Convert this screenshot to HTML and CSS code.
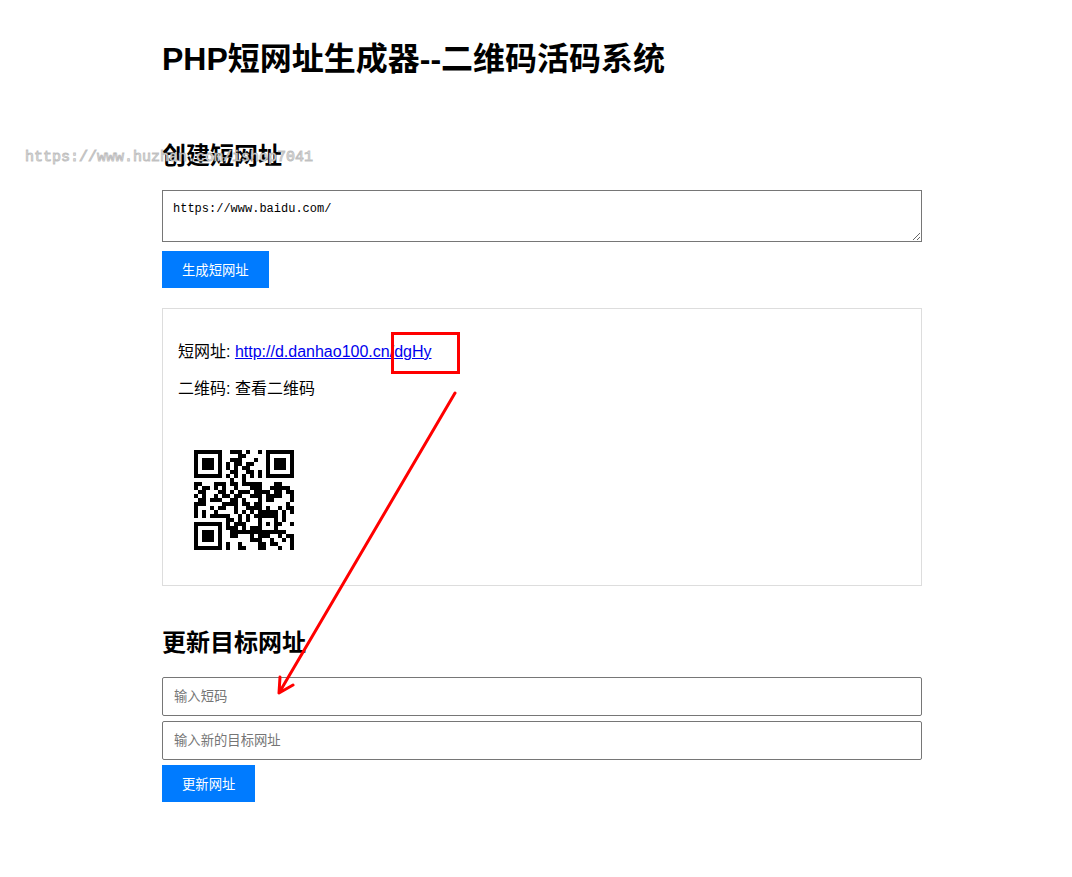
FILE: index.html
```html
<!DOCTYPE html>
<html lang="zh-CN">
  <head>
    <meta charset="UTF-8" />
    <meta name="viewport" content="width=device-width, initial-scale=1.0" />
    <title>PHP短网址生成器--二维码活码系统</title>
    <link rel="stylesheet" href="styles.css">
  </head>
  <body>
    <main class="container">
      <h1>PHP短网址生成器--二维码活码系统</h1>

      <section class="section">
        <h2 id="createTitle">创建短网址</h2>
        <form class="form">
          <textarea rows="2" class="field url-input" aria-labelledby="createTitle">https://www.baidu.com/</textarea>
          <button type="button">生成短网址</button>
        </form>

        <div class="result">
          <p>短网址: <a href="http://d.danhao100.cn/dgHy">http://d.danhao100.cn/<span class="short-code">dgHy</span></a></p>
          <p>二维码: 查看二维码</p>
          <svg class="qrcode" id="qrcode" role="img" aria-label="二维码"></svg>
        </div>
      </section>

      <section class="section">
        <h2>更新目标网址</h2>
        <form class="form">
          <input type="text" class="field" placeholder="输入短码" aria-label="输入短码" />
          <input type="text" class="field" placeholder="输入新的目标网址" aria-label="输入新的目标网址" />
          <button type="button">更新网址</button>
        </form>
      </section>

      <!-- 标注箭头 -->
      <svg class="arrow" viewBox="0 0 190 310" fill="none" stroke="#f00" stroke-width="3" stroke-linecap="round" stroke-linejoin="round">
        <path d="M183 3L7 303M8 287L7 303L21 295" />
      </svg>
      <div class="watermark">https://www.huzhan.com/ishop7041</div>
    </main>

    <script src="qrcode.js"></script>
    <script>
      drawQr(
        document.getElementById("qrcode"),
        document.querySelector(".result a").textContent,
        "L",
        5
      );
    </script>
  </body>
</html>
```
FILE: styles.css
```css
* {
  box-sizing: border-box;
}

body {
  margin: 0;
  padding: 40px 20px 40px 32px;
  font-family: "Liberation Sans", "Noto Sans CJK SC", sans-serif;
  font-size: 16px;
  line-height: 21px;
  color: #000;
  background: #fff;
}

.container {
  position: relative;
  max-width: 760px;
  margin: 0 auto;
}

h1 {
  margin: 0;
  font-size: 32px;
  line-height: 38px;
}

h2 {
  margin: 0 0 19px;
  font-size: 24px;
  line-height: 30px;
}

.section {
  margin-top: 42px;
}

h1 + .section {
  margin-top: 63px;
}

.form {
  display: flex;
  flex-direction: column;
  align-items: flex-start;
  gap: 5px;
}

.field {
  display: block;
  width: 100%;
  padding: 10px 11px;
  border: 1px solid #767676;
  border-radius: 2px;
  font-family: inherit;
  line-height: 17px;
}

.url-input {
  margin-bottom: 4px;
  padding: 11px 10px 9px;
  border-radius: 0;
  font-family: "Liberation Mono", monospace;
  font-size: 12px;
  line-height: 15px;
}

.field::placeholder {
  color: #757575;
}

button {
  padding: 11px 20px 9px;
  background: #007bff;
  color: #fff;
  border: none;
  font-family: inherit;
  line-height: 17px;
  cursor: pointer;
}

.result {
  margin-top: 20px;
  padding: 16px 15px 19px;
  border: 1px solid #ddd;
}

.result p {
  margin: 16px 0;
}

.result a {
  color: #00e;
}

.qrcode {
  display: block;
  width: 132px;
  height: 132px;
  margin-top: 35px;
  padding: 16px;
}

/* 标注 */
.short-code {
  position: relative;
}

.short-code::after {
  content: "";
  position: absolute;
  top: -11px;
  left: -3px;
  box-sizing: border-box;
  width: 69px;
  height: 42px;
  border: 3px solid #f00;
}

.arrow {
  position: absolute;
  top: 350px;
  left: 110px;
  width: 190px;
  height: 310px;
  pointer-events: none;
}

.watermark {
  position: absolute;
  top: 107px;
  left: -137px;
  color: #fff;
  font-family: "Liberation Mono", monospace;
  font-size: 15px;
  -webkit-text-stroke: 1px rgba(150, 150, 150, 0.6);
  pointer-events: none;
}
```
FILE: qrcode.js
```js
// 版本 2 二维码（25x25，字节模式）
const QR_SIZE = 25;
const QR_LEVELS = {
  L: { bits: 1, data: 34, ec: 10 },
  M: { bits: 0, data: 28, ec: 16 },
};

const QR_MASKS = [
  (r, c) => (r + c) % 2 === 0,
  (r, c) => r % 2 === 0,
  (r, c) => c % 3 === 0,
  (r, c) => (r + c) % 3 === 0,
  (r, c) => (Math.floor(r / 2) + Math.floor(c / 3)) % 2 === 0,
  (r, c) => ((r * c) % 2) + ((r * c) % 3) === 0,
  (r, c) => (((r * c) % 2) + ((r * c) % 3)) % 2 === 0,
  (r, c) => (((r + c) % 2) + ((r * c) % 3)) % 2 === 0,
];

// GF(256) 乘法
function gfMul(a, b) {
  let result = 0;
  while (b) {
    if (b & 1) result ^= a;
    a <<= 1;
    if (a & 256) a ^= 0x11d;
    b >>= 1;
  }
  return result;
}

// 纠错码
function getEcWords(data, count) {
  let gen = [1];
  let root = 1;
  for (let i = 0; i < count; i++) {
    const next = new Array(gen.length + 1).fill(0);
    gen.forEach((g, j) => {
      next[j] ^= g;
      next[j + 1] ^= gfMul(g, root);
    });
    gen = next;
    root = gfMul(root, 2);
  }

  const rest = data.concat(new Array(count).fill(0));
  for (let i = 0; i < data.length; i++) {
    const factor = rest[i];
    gen.forEach((g, j) => (rest[i + j] ^= gfMul(g, factor)));
  }
  return rest.slice(data.length);
}

// 数据码字
function getDataWords(text, count) {
  const toBits = (n, len) => n.toString(2).padStart(len, "0");
  let bits = "0100" + toBits(text.length, 8);
  for (const ch of text) bits += toBits(ch.charCodeAt(0), 8);
  bits += "0000";
  const words = bits.match(/.{8}/g).map((b) => parseInt(b, 2));
  for (let pad = 0xec; words.length < count; pad ^= 0xec ^ 0x11) {
    words.push(pad);
  }
  return words;
}

function makeQr(text, level, mask) {
  const info = QR_LEVELS[level];
  const grid = Array.from({ length: QR_SIZE }, () =>
    new Array(QR_SIZE).fill(null)
  );
  const last = QR_SIZE - 1;

  // 定位图案
  [[3, 3], [3, last - 3], [last - 3, 3]].forEach(([row, col]) => {
    for (let y = -4; y <= 4; y++) {
      for (let x = -4; x <= 4; x++) {
        if (grid[row + y] && grid[row + y][col + x] !== undefined) {
          const d = Math.max(Math.abs(x), Math.abs(y));
          grid[row + y][col + x] = d !== 2 && d !== 4 ? 1 : 0;
        }
      }
    }
  });

  // 时序图案
  for (let i = 8; i < QR_SIZE - 8; i++) {
    grid[6][i] = grid[i][6] = (i + 1) % 2;
  }

  // 校正图案
  for (let y = -2; y <= 2; y++) {
    for (let x = -2; x <= 2; x++) {
      grid[18 + y][18 + x] = Math.max(Math.abs(x), Math.abs(y)) !== 1 ? 1 : 0;
    }
  }

  // 格式信息
  const format = (info.bits << 3) | mask;
  let rem = format;
  for (let i = 0; i < 10; i++) rem = (rem << 1) ^ ((rem >> 9) * 0x537);
  const code = ((format << 10) | rem) ^ 0x5412;
  const bit = (i) => (code >> i) & 1;
  for (let i = 0; i < 6; i++) grid[i][8] = bit(i);
  grid[7][8] = bit(6);
  grid[8][8] = bit(7);
  grid[8][7] = bit(8);
  for (let i = 9; i < 15; i++) grid[8][14 - i] = bit(i);
  for (let i = 0; i < 8; i++) grid[8][last - i] = bit(i);
  for (let i = 8; i < 15; i++) grid[QR_SIZE - 15 + i][8] = bit(i);
  grid[QR_SIZE - 8][8] = 1;

  // 填充数据
  const data = getDataWords(text, info.data);
  const words = data.concat(getEcWords(data, info.ec));
  let index = 0;
  let up = true;
  for (let right = last; right > 0; right -= 2) {
    if (right === 6) right = 5;
    for (let i = 0; i < QR_SIZE; i++) {
      const row = up ? last - i : i;
      for (const col of [right, right - 1]) {
        if (grid[row][col] !== null) continue;
        const word = words[index >> 3] || 0;
        const value = (word >> (7 - (index & 7))) & 1;
        grid[row][col] = value ^ (QR_MASKS[mask](row, col) ? 1 : 0);
        index++;
      }
    }
    up = !up;
  }
  return grid;
}

function drawQr(svg, text, level, mask) {
  const path = document.createElementNS("http://www.w3.org/2000/svg", "path");
  let d = "";
  makeQr(text, level, mask).forEach((row, y) => {
    row.forEach((on, x) => {
      if (on) d += `M${x} ${y}h1v1h-1z`;
    });
  });
  path.setAttribute("d", d);
  svg.setAttribute("viewBox", `0 0 ${QR_SIZE} ${QR_SIZE}`);
  svg.setAttribute("shape-rendering", "crispEdges");
  svg.appendChild(path);
}
```
